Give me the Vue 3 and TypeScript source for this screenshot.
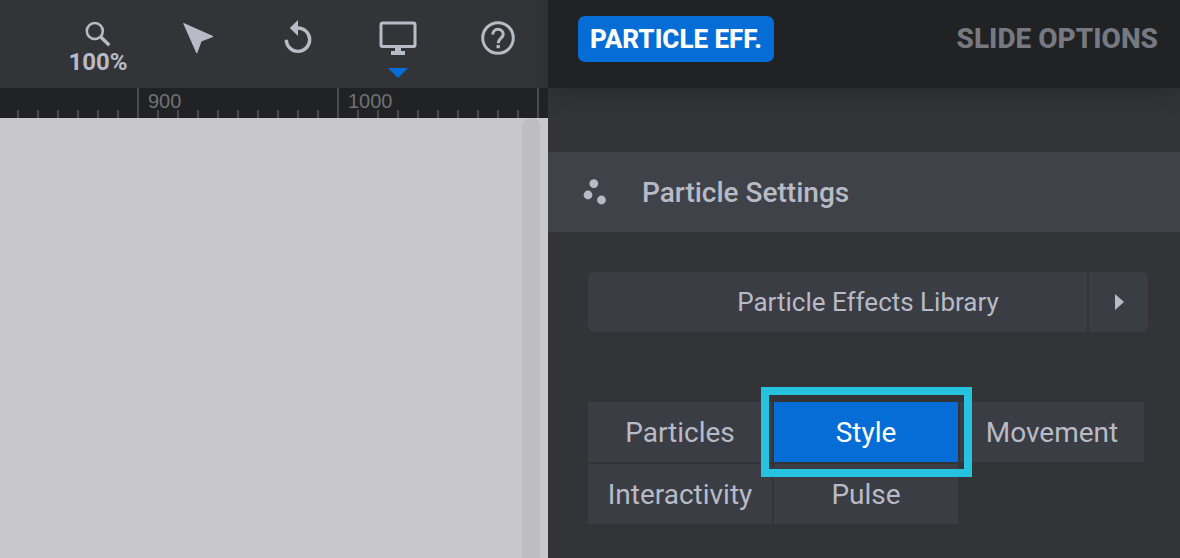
<script setup lang="ts">
interface RulerSegment {
  id: number
  label: string
}

const segments: RulerSegment[] = [
  { id: 800, label: '' },
  { id: 900, label: '900' },
  { id: 1000, label: '1000' },
]

const tabs: string[] = ['Particles', 'Style', 'Movement', 'Interactivity', 'Pulse']
const activeTab = 'Style'
</script>

<template>
  <div class="app">
    <main class="editor">
      <nav class="toolbar" aria-label="Editor tools">
        <button class="tool zoom" type="button">
          <svg width="28" height="28" viewBox="0 0 28 28" aria-hidden="true">
            <circle cx="10.800" cy="11" r="8" fill="none" stroke="currentColor" stroke-width="2.600" />
            <path d="M16.300 16.500 L25.300 25.300" fill="none" stroke="currentColor" stroke-width="3.400" />
          </svg>
          <span>100%</span>
        </button>
        <button class="tool" type="button" aria-label="Select">
          <svg width="32" height="32" viewBox="0 0 32 32" aria-hidden="true">
            <path d="M1.700 1.500 L31 14.500 L19.200 19 L14.800 31 Z" fill="currentColor" stroke="currentColor" stroke-width="1" stroke-linejoin="round" />
          </svg>
        </button>
        <button class="tool" type="button" aria-label="Undo">
          <svg width="32" height="36" viewBox="0 0 32 36" aria-hidden="true">
            <path d="M15.500 8 A11.700 11.700 0 1 1 4.300 19.700" fill="none" stroke="currentColor" stroke-width="3.400" />
            <path d="M16 0 V16 L7.800 8 Z" fill="currentColor" />
          </svg>
        </button>
        <button class="tool" type="button" aria-label="Desktop view">
          <svg width="38" height="34" viewBox="0 0 38 34" aria-hidden="true">
            <rect x="2" y="2" width="34" height="23.500" rx="1.500" fill="none" stroke="currentColor" stroke-width="3" />
            <path d="M16 26 H22 V30 H26 V34 H12 V30 H16 Z" fill="currentColor" />
          </svg>
          <svg class="caret" width="20" height="10" viewBox="0 0 20 10" aria-hidden="true">
            <path d="M0 0 H20 L10 10 Z" fill="currentColor" />
          </svg>
        </button>
        <button class="tool" type="button" aria-label="Help">
          <svg width="34" height="34" viewBox="0 0 34 34" aria-hidden="true">
            <circle cx="17" cy="17" r="15.300" fill="none" stroke="currentColor" stroke-width="3" />
            <path d="M11.800 13.500 A5.200 5.200 0 0 1 22.200 13.500 C22.200 17 17.200 17.500 17.200 22.200" fill="none" stroke="currentColor" stroke-width="3" />
            <rect x="15.500" y="24" width="3.400" height="3.200" fill="currentColor" />
          </svg>
        </button>
      </nav>
      <div class="ruler">
        <div v-for="segment in segments" :key="segment.id" class="segment">{{ segment.label }}</div>
        <div class="segment last"></div>
      </div>
      <div class="canvas">
        <div class="scrollbar"></div>
      </div>
    </main>

    <aside class="sidebar">
      <header class="modes">
        <button class="mode selected" type="button">PARTICLE EFF.</button>
        <button class="mode" type="button">SLIDE OPTIONS</button>
      </header>
      <h2 class="heading">
        <svg width="24" height="26" viewBox="0 0 24 26" aria-hidden="true">
          <circle cx="10.800" cy="4.600" r="4.400" fill="currentColor" />
          <circle cx="5" cy="16" r="4.400" fill="currentColor" />
          <circle cx="18.500" cy="21" r="4.400" fill="currentColor" />
        </svg>
        Particle Settings
      </h2>
      <section class="settings">
        <div class="library">
          <button class="library-name" type="button">Particle Effects Library</button>
          <button class="library-open" type="button" aria-label="Open library">
            <svg width="9" height="16" viewBox="0 0 9 16" aria-hidden="true">
              <path d="M0 0 L9 8 L0 16 Z" fill="currentColor" />
            </svg>
          </button>
        </div>
        <div class="tabs">
          <button
            v-for="tab in tabs"
            :key="tab"
            type="button"
            class="tab"
            :class="{ active: tab === activeTab }"
          >{{ tab }}</button>
        </div>
      </section>
    </aside>
  </div>
</template>

<style>
body {
  margin: 0;
  background: #333437;
}
</style>

<style scoped>
.app {
  display: grid;
  grid-template-columns: minmax(0, 1fr) 632px;
  min-height: 100vh;
  overflow: hidden;
  font-family: Roboto, "Liberation Sans", sans-serif;
  color: #b8bbc5;
  background: #333437;
}
button {
  margin: 0;
  padding: 0;
  border: 0;
  background: none;
  color: inherit;
  font: inherit;
  cursor: pointer;
}
svg {
  display: block;
  flex: none;
}
.editor {
  display: flex;
  flex-direction: column;
  min-width: 0;
}
.toolbar {
  display: flex;
  justify-content: flex-end;
  height: 88px;
  background: linear-gradient(to left, #2f3033, #333437 18px);
}
.tool {
  position: relative;
  display: flex;
  flex: none;
  flex-direction: column;
  align-items: center;
  justify-content: center;
  box-sizing: border-box;
  width: 100px;
  padding-bottom: 12px;
}
.zoom {
  padding-bottom: 0;
  padding-top: 8px;
  font-size: 24px;
  font-weight: 700;
  line-height: 28px;
}
.caret {
  position: absolute;
  top: 68px;
  left: 40px;
  color: #066dd6;
}
.ruler {
  display: flex;
  justify-content: flex-end;
  height: 30px;
  overflow: hidden;
  background: #212224;
}
.segment {
  flex: none;
  box-sizing: border-box;
  width: 200px;
  padding-left: 9px;
  border-left: 2px solid #4a4b4e;
  color: #707174;
  background: repeating-linear-gradient(to right, transparent 0 18px, #4a4b4e 18px 20px) left bottom / 100% 8px no-repeat;
  font-family: "Liberation Sans", Arial, sans-serif;
  font-size: 20px;
  line-height: 26px;
}
.last {
  width: 11px;
}
.canvas {
  display: flex;
  flex: 1;
  justify-content: flex-end;
  padding-right: 8px;
  background: #c8c7cc;
}
.scrollbar {
  width: 18px;
  border-radius: 9px 9px 0 0;
  background: #bebdc2;
}
.sidebar {
  min-width: 0;
  overflow: hidden;
}
.modes {
  display: flex;
  align-items: center;
  justify-content: space-between;
  box-sizing: border-box;
  height: 88px;
  padding: 0 22px 10px 30px;
  background: #212224;
  box-shadow: 0 0 30px rgba(0, 0, 0, 0.3);
  font-size: 28px;
  font-weight: 800;
  line-height: 46px;
}
.mode {
  color: #777981;
}
.selected {
  padding: 0 12px;
  border-radius: 7px;
  color: #fff;
  background: #066dd6;
  font-size: 26px;
}
.heading {
  display: flex;
  align-items: center;
  gap: 35px;
  height: 80px;
  margin: 64px 0 0;
  padding-left: 35px;
  background: #40424a;
  font-size: 28px;
  font-weight: 500;
}
.settings {
  padding: 40px 32px 34px 40px;
}
.library {
  display: grid;
  grid-template-columns: 1fr 59px;
  gap: 2px;
  height: 60px;
  margin-bottom: 70px;
  font-size: 26px;
}
.library-name,
.library-open,
.tab {
  background: #3b3d45;
}
.library-name {
  padding-left: 61px;
  border-radius: 6px 0 0 6px;
}
.library-open {
  display: flex;
  align-items: center;
  justify-content: center;
  padding-left: 2px;
  border-radius: 0 6px 6px 0;
}
.tabs {
  display: grid;
  grid-template-columns: repeat(3, 1fr);
  grid-auto-rows: 60px;
  gap: 2px;
  margin-right: 4px;
  font-size: 28px;
}
.active {
  position: relative;
  color: #fff;
  background: #066dd6;
}
.active::after {
  content: "";
  position: absolute;
  inset: -15px -14px -15px -13px;
  border: 8px solid #25c3e0;
}
</style>
